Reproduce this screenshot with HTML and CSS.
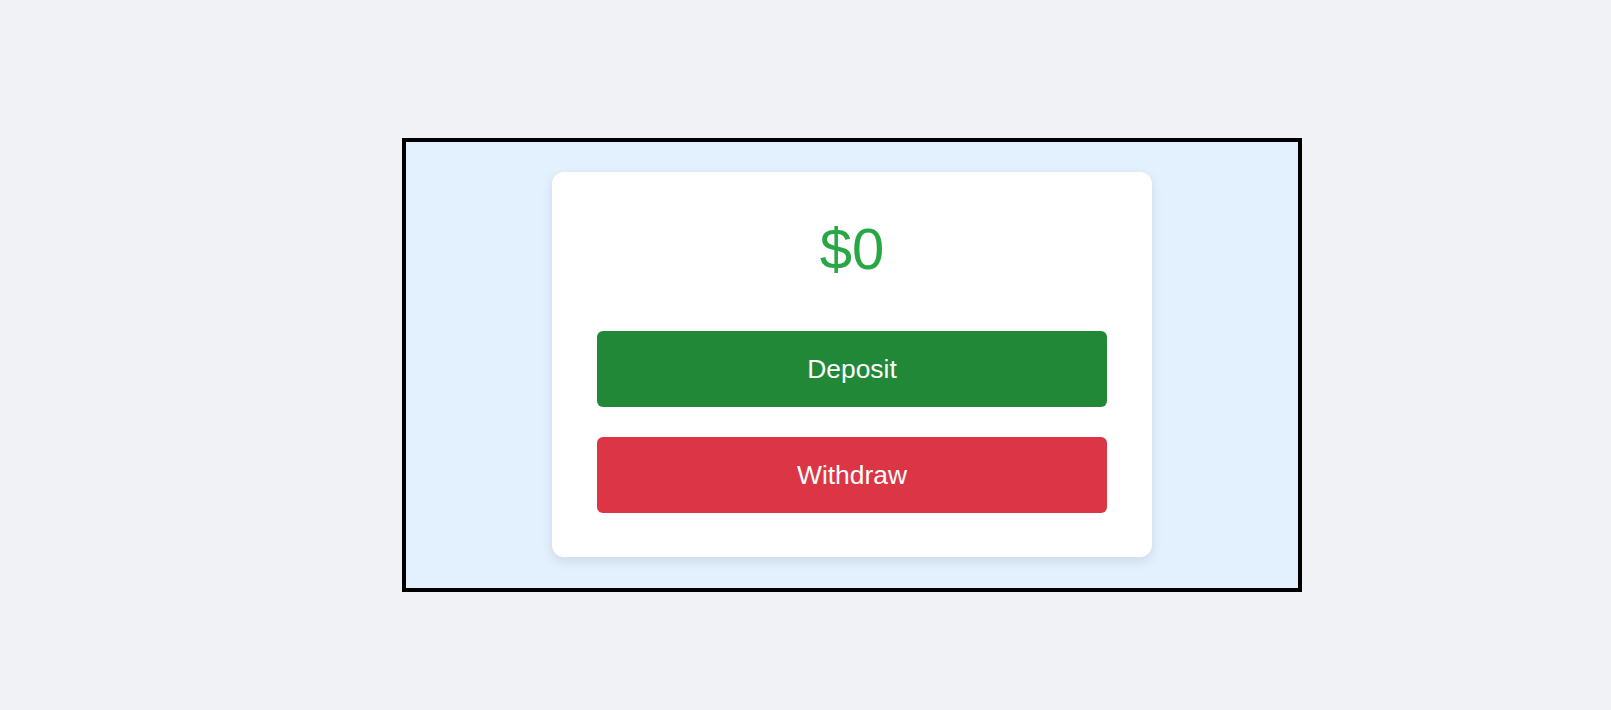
FILE: index.html
```html
<!DOCTYPE html>
<html>
<head>
<meta charset="utf-8">
<link rel="stylesheet" href="styles.css">
</head>
<body>
<div class="page">
  <div class="frame">
    <div class="card">
      <div class="balance">$0</div>
      <div class="actions">
        <button class="btn btn-deposit">Deposit</button>
        <button class="btn btn-withdraw">Withdraw</button>
      </div>
    </div>
  </div>
</div>
</body>
</html>
```

FILE: styles.css
```css
html, body {
  margin: 0;
  padding: 0;
  background: #f0f2f5;
  font-family: "Liberation Sans", Arial, sans-serif;
}
.page {
  padding: 138px 0 0 402px;
}
.frame {
  box-sizing: border-box;
  width: 900px;
  height: 454px;
  border: 4px solid #000;
  background: #e3f0fe;
  display: flex;
  justify-content: center;
  padding-top: 30px;
}
.card {
  box-sizing: border-box;
  width: 600px;
  height: 385px;
  background: #fff;
  border-radius: 12px;
  box-shadow: 0 4px 12px rgba(0, 0, 0, 0.1);
  padding: 45px;
  display: flex;
  flex-direction: column;
}
.balance {
  font-size: 58px;
  line-height: 64px;
  color: #28a745;
  text-align: center;
  margin-bottom: 50px;
}
.actions {
  display: flex;
  flex-direction: column;
  gap: 30px;
}
.btn {
  display: block;
  width: 100%;
  height: 76px;
  border: none;
  border-radius: 6px;
  color: #fff;
  font-family: "Liberation Sans", Arial, sans-serif;
  font-size: 26.4px;
  cursor: pointer;
}
.btn-deposit {
  background: #218838;
}
.btn-withdraw {
  background: #dc3545;
}
```
